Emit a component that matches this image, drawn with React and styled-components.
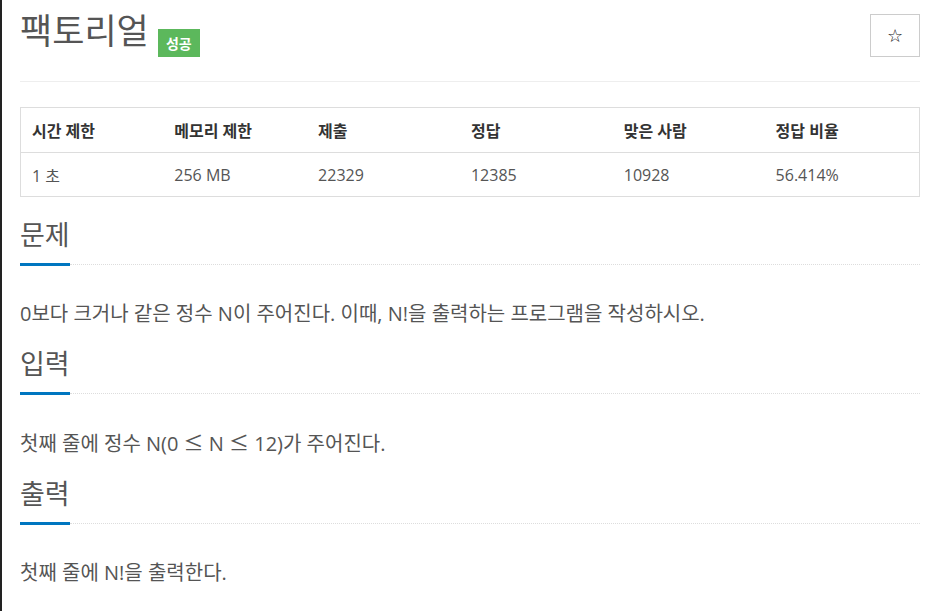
import React from 'react'
import styled, { createGlobalStyle } from 'styled-components'

const GlobalStyle = createGlobalStyle`
  html, body {
    margin: 0;
    padding: 0;
    background: #fff;
  }
  body {
    font-family: "Open Sans", "Noto Sans CJK KR", sans-serif;
    color: #555;
    border-left: 2px solid #222;
    min-height: 611px;
    box-sizing: border-box;
  }
`

const Page = styled.div`
  width: 900px;
  padding: 0 18px;
`

const Header = styled.div`
  display: flex;
  justify-content: space-between;
  align-items: flex-start;
  padding-top: 5px;
  padding-bottom: 24px;
  border-bottom: 1px solid #eee;
`

const TitleRow = styled.div`
  display: flex;
  align-items: flex-end;
  gap: 9px;
`

const Title = styled.h1`
  margin: 0;
  font-size: 35px;
  font-weight: 400;
  line-height: 52px;
  color: #555;
`

const Badge = styled.span`
  display: inline-flex;
  align-items: center;
  justify-content: center;
  width: 42px;
  height: 28px;
  background: #5cb85c;
  color: #fff;
  font-size: 14px;
  font-weight: 700;
`

const StarButton = styled.button`
  width: 50px;
  height: 43px;
  margin-top: 9px;
  border: 1px solid #ccc;
  background: #fff;
  color: #111;
  font-size: 18px;
  display: flex;
  align-items: center;
  justify-content: center;
  padding: 0;
  font-family: "DejaVu Sans", sans-serif;
`

const Table = styled.table`
  width: 900px;
  margin-top: 25px;
  border-collapse: collapse;
  border: 1px solid #ddd;
  font-size: 16px;

  th, td {
    text-align: left;
    padding: 0 0 0 11px;
  }
  th {
    height: 44px;
    font-weight: 700;
    color: #333;
    border-bottom: 1px solid #ddd;
  }
  td {
    height: 43px;
    color: #555;
  }
`

const Section = styled.section`
  margin-top: ${p => p.first ? '20px' : '17px'};
`

const Headline = styled.div`
  display: flex;
  align-items: flex-end;
`

const HeadText = styled.h2`
  margin: 0;
  font-size: 27px;
  font-weight: 400;
  line-height: 36px;
  color: #555;
  padding-bottom: 10px;
  border-bottom: 3px solid #0076c0;
  width: 50px;
  white-space: nowrap;
`

const Dotted = styled.div`
  flex: 1;
  border-bottom: 1px dotted #ddd;
  margin-bottom: 1px;
`

const Body = styled.p`
  margin: 0;
  padding-top: 33px;
  font-size: 20px;
  line-height: 30px;
  color: #555;
`

const MathSign = styled.span`
  font-family: "Noto Sans CJK KR", sans-serif;
`

const cols = [143, 144, 153, 153, 152, 155]
const heads = ['시간 제한', '메모리 제한', '제출', '정답', '맞은 사람', '정답 비율']
const vals = ['1 초', '256 MB', '22329', '12385', '10928', '56.414%']

const sections = [
  { title: '문제', text: '0보다 크거나 같은 정수 N이 주어진다. 이때, N!을 출력하는 프로그램을 작성하시오.' },
  {
    title: '입력',
    text: <>첫째 줄에 정수 N(0 <MathSign>≤</MathSign> N <MathSign>≤</MathSign> 12)가 주어진다.</>,
  },
  { title: '출력', text: '첫째 줄에 N!을 출력한다.' },
]

export default function App() {
  return (
    <>
      <GlobalStyle />
      <Page>
        <Header>
          <TitleRow>
            <Title>팩토리얼</Title>
            <Badge>성공</Badge>
          </TitleRow>
          <StarButton>☆</StarButton>
        </Header>
        <Table>
          <colgroup>
            {cols.map((w, i) => <col key={i} style={{ width: w }} />)}
          </colgroup>
          <thead>
            <tr>{heads.map(h => <th key={h}>{h}</th>)}</tr>
          </thead>
          <tbody>
            <tr>{vals.map(v => <td key={v}>{v}</td>)}</tr>
          </tbody>
        </Table>
        {sections.map((s, i) => (
          <Section key={s.title} first={i === 0}>
            <Headline>
              <HeadText>{s.title}</HeadText>
              <Dotted />
            </Headline>
            <Body>{s.text}</Body>
          </Section>
        ))}
      </Page>
    </>
  )
}
